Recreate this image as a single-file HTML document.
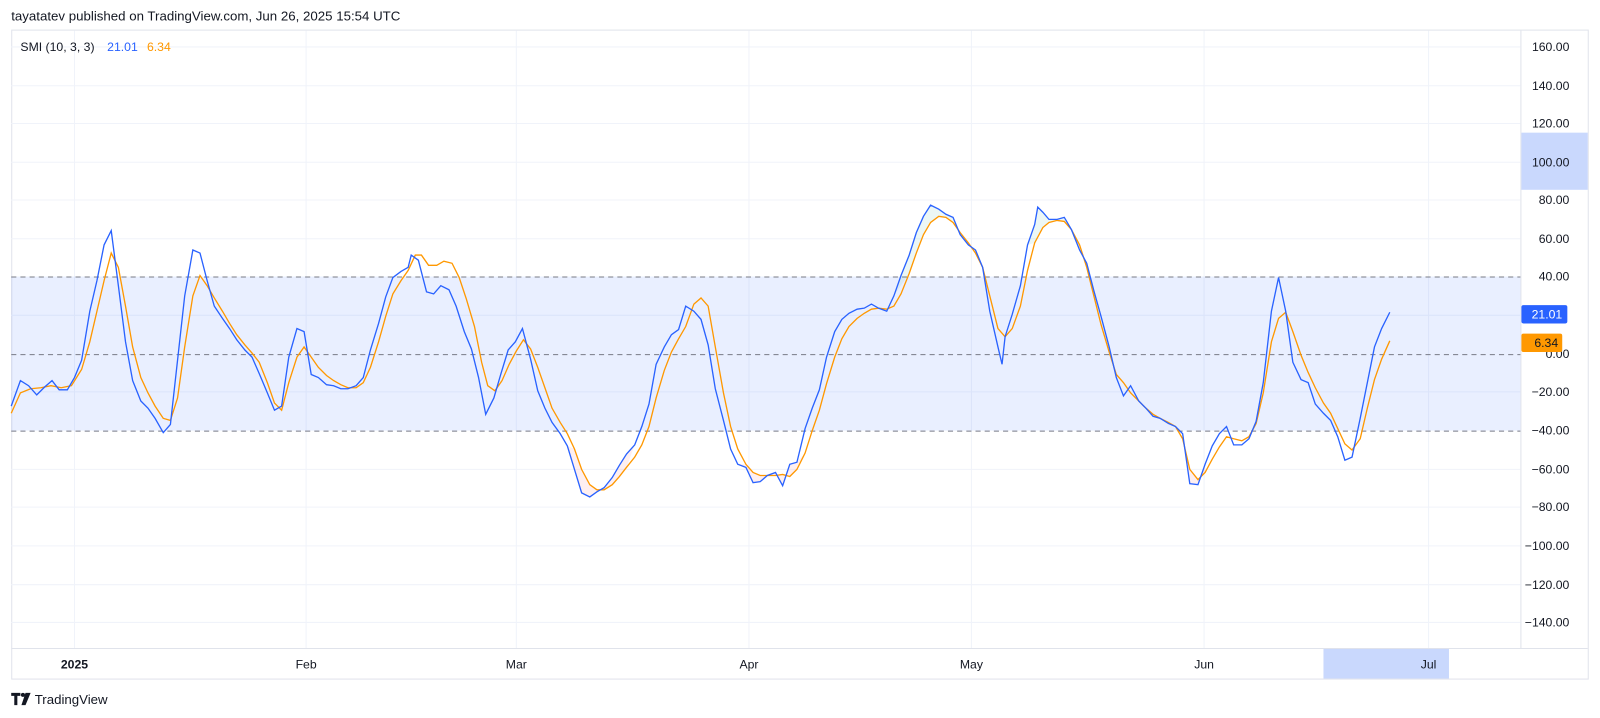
<!DOCTYPE html>
<html><head><meta charset="utf-8"><style>
html,body{margin:0;padding:0;background:#fff;overflow:hidden}
#w{width:1568px;height:704px;position:relative;transform:scale(1.0204);transform-origin:0 0;font-family:"Liberation Sans",sans-serif;color:#131722}
.t{position:absolute;white-space:nowrap}
</style></head><body><div id="w">
<div class="t" style="left:11px;top:8px;font-size:13px;color:#131722">tayatatev published on TradingView.com, Jun 26, 2025 15:54 UTC</div>
<svg width="1568" height="704" style="position:absolute;left:0;top:0" font-family="Liberation Sans, sans-serif">
<rect x="11.5" y="29.5" width="1545" height="636" fill="none" stroke="#e0e3eb"/>
<line x1="1490.5" y1="30" x2="1490.5" y2="635" stroke="#e0e3eb"/>
<line x1="11" y1="635.5" x2="1556" y2="635.5" stroke="#e0e3eb"/>
<g stroke="#f0f3fa">
<line x1="11" y1="46" x2="1490" y2="46"/><line x1="11" y1="84" x2="1490" y2="84"/><line x1="11" y1="121" x2="1490" y2="121"/><line x1="11" y1="159" x2="1490" y2="159"/><line x1="11" y1="196" x2="1490" y2="196"/><line x1="11" y1="234" x2="1490" y2="234"/><line x1="11" y1="309" x2="1490" y2="309"/><line x1="11" y1="384" x2="1490" y2="384"/><line x1="11" y1="460" x2="1490" y2="460"/><line x1="11" y1="497" x2="1490" y2="497"/><line x1="11" y1="535" x2="1490" y2="535"/><line x1="11" y1="573" x2="1490" y2="573"/><line x1="11" y1="610" x2="1490" y2="610"/>
<line x1="73" y1="30" x2="73" y2="635"/><line x1="300" y1="30" x2="300" y2="635"/><line x1="506" y1="30" x2="506" y2="635"/><line x1="734" y1="30" x2="734" y2="635"/><line x1="952" y1="30" x2="952" y2="635"/><line x1="1180" y1="30" x2="1180" y2="635"/><line x1="1400" y1="30" x2="1400" y2="635"/>
</g>
<rect x="11" y="271" width="1479" height="151" fill="#2962ff" fill-opacity="0.1"/>
<g stroke="#787b86" stroke-dasharray="5,4" stroke-width="1"><line x1="11" y1="271.5" x2="1490" y2="271.5"/><line x1="11" y1="347.5" x2="1490" y2="347.5"/><line x1="11" y1="422.5" x2="1490" y2="422.5"/></g>
<polygon points="876,290 883,270 891,250 898,228 905,212 912,201 920,205 927,210 934,213 941,230 949,240 956,248 941,228 934,218 927,213 920,212 912,218 905,230 898,248 891,268" fill="#089981" fill-opacity="0.08"/>
<polygon points="1007,240 1014,220 1017,203 1022,208 1028,215 1036,215 1043,213 1050,225 1058,245 1058,240 1050,225 1043,217 1036,216 1028,218 1022,223 1014,238" fill="#089981" fill-opacity="0.08"/>
<polygon points="556,437 563,460 570,483 578,487 585,482 592,478 600,468 607,456 614,445 622,436 614,458 607,467 600,475 592,480 585,480 578,475 570,460 563,440" fill="#f23645" fill-opacity="0.08"/>
<polygon points="723,455 731,458 738,473 745,472 752,466 760,463 767,476 774,455 781,453 789,444 781,460 774,467 767,465 760,466 752,466 745,466 738,463 731,455" fill="#f23645" fill-opacity="0.08"/>
<polygon points="1159,425 1166,474 1174,475 1181,455 1181,463 1174,470 1166,460 1159,430" fill="#f23645" fill-opacity="0.08"/>
<polyline fill="none" stroke="#ff9800" stroke-width="1.3" points="11,405 20,385 30,381 40,380 50,378 60,380 70,378 80,362 88,335 95,305 102,275 109,248 116,262 123,300 130,340 138,370 145,385 152,398 160,410 167,412 174,390 181,340 189,290 196,270 203,280 210,292 218,305 225,317 232,328 240,338 247,346 254,355 262,375 269,395 276,402 283,375 291,350 298,340 305,350 312,360 320,368 327,373 334,377 341,380 349,380 356,375 363,360 371,335 378,310 385,288 393,275 400,265 407,250 413,250 420,260 428,260 435,256 443,258 450,272 457,293 465,320 472,355 478,378 485,383 492,373 499,357 506,344 513,333 520,342 527,360 534,380 541,400 549,414 556,425 563,440 570,460 578,475 585,480 592,480 600,475 607,467 614,458 622,448 629,436 636,418 643,390 651,363 658,345 665,332 672,320 680,298 687,292 694,300 701,340 709,385 716,418 723,440 731,455 738,463 745,466 752,466 760,466 767,465 774,467 781,460 789,444 796,422 803,402 810,376 818,350 825,332 832,320 840,312 847,307 854,303 861,302 869,303 876,300 883,288 891,268 898,248 905,230 912,218 920,212 927,213 934,218 941,228 949,238 956,248 963,262 970,290 978,322 985,330 992,322 1000,300 1007,265 1014,238 1022,223 1028,218 1036,216 1043,217 1050,225 1058,240 1065,262 1072,290 1079,318 1087,345 1094,367 1101,375 1108,385 1116,393 1123,400 1130,406 1137,410 1145,414 1152,418 1159,430 1166,460 1174,470 1181,463 1188,450 1195,438 1202,428 1209,430 1217,432 1224,428 1231,415 1238,385 1246,335 1253,312 1260,306 1267,325 1275,348 1282,365 1289,380 1297,395 1304,405 1311,420 1318,435 1325,441 1333,430 1340,400 1347,372 1354,352 1362,334"/>
<polyline fill="none" stroke="#2962ff" stroke-width="1.3" points="11,398 20,373 28,378 36,387 44,379 51,373 58,382 66,382 73,370 80,353 88,305 95,275 102,240 109,226 116,280 123,335 130,373 138,393 145,400 152,410 160,424 167,416 174,353 181,290 189,245 196,248 203,275 210,300 218,312 225,322 232,333 240,343 247,350 254,366 262,385 269,402 276,398 283,350 291,322 298,325 305,367 312,370 320,377 327,378 334,381 341,381 349,378 356,370 363,343 371,317 378,291 385,272 393,266 400,262 403,250 410,255 418,286 425,288 432,280 440,284 447,300 455,325 462,342 469,370 476,406 484,390 491,366 498,343 505,335 512,322 520,352 527,383 534,400 541,414 549,425 556,437 563,460 570,483 578,487 585,482 592,478 600,468 607,456 614,445 622,436 629,418 636,396 643,357 651,340 658,328 665,323 672,300 680,305 687,313 694,338 701,381 709,412 716,440 723,455 731,458 738,473 745,472 752,466 760,463 767,476 774,455 781,453 789,420 796,400 803,382 810,350 818,325 825,313 832,307 840,303 847,302 854,298 861,302 869,305 876,290 883,270 891,250 898,228 905,212 912,201 920,205 927,210 934,213 941,230 949,240 956,245 963,262 970,305 978,340 982,357 985,330 992,308 1000,280 1007,240 1014,220 1017,203 1022,208 1028,215 1036,215 1043,213 1050,225 1058,245 1065,258 1072,285 1079,310 1087,340 1094,370 1101,388 1108,378 1116,393 1123,400 1130,408 1137,410 1145,415 1152,418 1159,425 1166,474 1174,475 1181,455 1188,437 1195,425 1202,418 1209,436 1217,436 1224,430 1231,413 1238,375 1246,305 1253,272 1260,305 1267,355 1275,372 1282,375 1289,396 1297,405 1304,412 1311,428 1318,451 1325,448 1333,410 1340,375 1347,340 1354,322 1362,306"/>
<rect x="1491" y="130" width="65" height="56" fill="#c9d8fd"/>
<rect x="1297" y="636" width="123" height="29" fill="#c9d8fd"/>
<g font-size="12" fill="#131722" text-anchor="end">
<text x="1538" y="50">160.00</text><text x="1538" y="88">140.00</text><text x="1538" y="125">120.00</text><text x="1538" y="163">100.00</text><text x="1538" y="200">80.00</text><text x="1538" y="238">60.00</text><text x="1538" y="275">40.00</text><text x="1538" y="351">0.00</text><text x="1538" y="388">−20.00</text><text x="1538" y="426">−40.00</text><text x="1538" y="464">−60.00</text><text x="1538" y="501">−80.00</text><text x="1538" y="539">−100.00</text><text x="1538" y="577">−120.00</text><text x="1538" y="614">−140.00</text>
</g>
<rect x="1491" y="299" width="45" height="18" rx="2" fill="#2962ff"/>
<text x="1531" y="312" font-size="12" fill="#fff" text-anchor="end">21.01</text>
<rect x="1491" y="327" width="40" height="18" rx="2" fill="#ff9800"/>
<text x="1527" y="340" font-size="12" fill="#131722" text-anchor="end">6.34</text>
<g font-size="12" fill="#131722" text-anchor="middle">
<text x="73" y="655" font-weight="bold">2025</text><text x="300" y="655">Feb</text><text x="506" y="655">Mar</text><text x="734" y="655">Apr</text><text x="952" y="655">May</text><text x="1180" y="655">Jun</text><text x="1400" y="655">Jul</text>
</g>
<text x="20" y="50" font-size="12" fill="#131722">SMI (10, 3, 3)</text>
<text x="105" y="50" font-size="12" fill="#2962ff">21.01</text>
<text x="144" y="50" font-size="12" fill="#ff9800">6.34</text>
<g fill="#131722"><path d="M11 679h9v3h-3v9h-3v-9h-3z"/><circle cx="22.5" cy="681" r="2"/><path d="M25 679h5l-5 12h-4z"/></g>
<text x="34" y="690" font-size="13" fill="#131722">TradingView</text>
</svg>
</div></body></html>
